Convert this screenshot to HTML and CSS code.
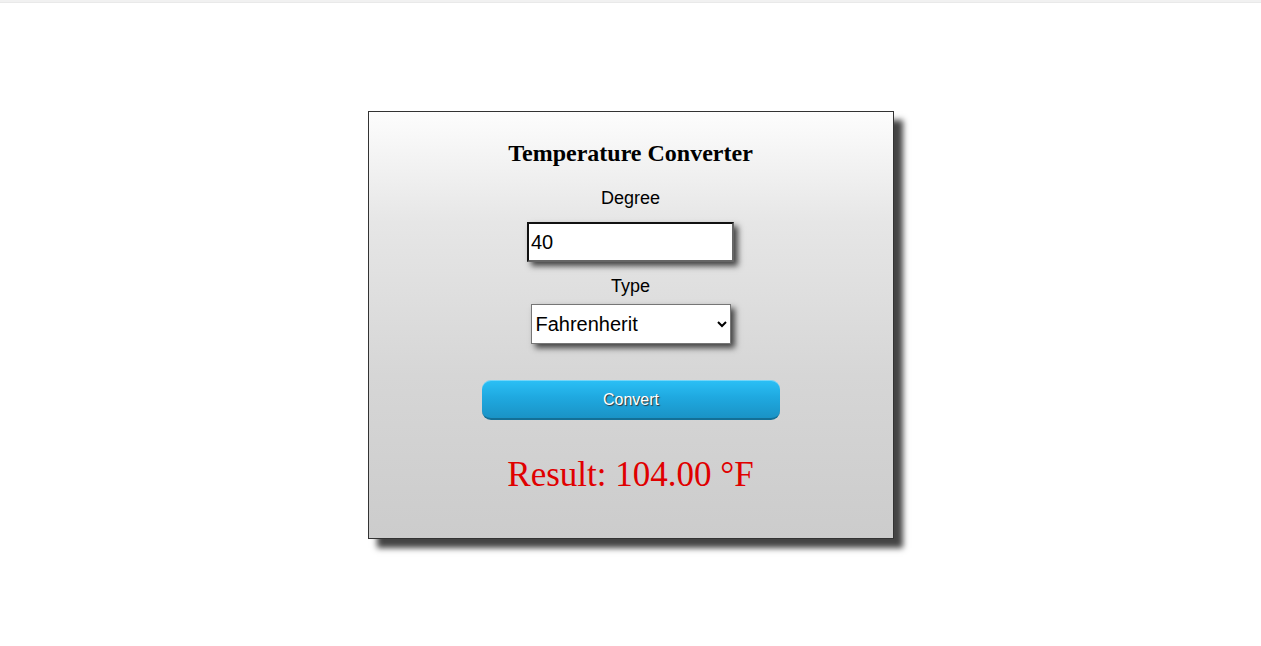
FILE: index.html
```html
<!DOCTYPE html>
<html lang="en">
<head>
<meta charset="utf-8">
<title>Temperature Converter</title>
<link rel="stylesheet" href="styles.css">
</head>
<body>
<div class="topbar"></div>
<div class="card">
  <h2 class="title">Temperature Converter</h2>
  <label class="label label-degree" for="degree">Degree</label>
  <input class="degree" id="degree" type="text" value="40">
  <label class="label label-type" for="type">Type</label>
  <select class="type" id="type">
    <option>Fahrenherit</option>
    <option>Celsius</option>
  </select>
  <button class="convert" type="button">Convert</button>
  <div class="result">Result: 104.00 °F</div>
</div>
</body>
</html>
```
FILE: styles.css
```css
html, body {
  margin: 0;
  padding: 0;
  background: #ffffff;
}

body {
  font-family: "Liberation Sans", Arial, sans-serif;
  min-height: 646px;
}

.topbar {
  height: 2px;
  background: #f1f1f1;
  border-bottom: 1px solid #e9e9e9;
}

.card {
  box-sizing: border-box;
  width: 526px;
  margin: 108px auto 40px;
  border: 1px solid #333333;
  background: linear-gradient(to bottom, #fdfdfd 0%, #e6e6e6 26%, #d6d6d6 62%, #cccccc 100%);
  box-shadow: 9px 9px 6px #444444;
  display: flex;
  flex-direction: column;
  align-items: center;
  padding: 28px 0 43px;
}

.title {
  margin: 0;
  font-family: "Liberation Serif", "Times New Roman", serif;
  font-size: 24px;
  font-weight: bold;
  line-height: 27px;
  color: #000;
}

.label {
  font-size: 18px;
  line-height: 21px;
  color: #000;
}

.label-degree {
  margin-top: 21px;
}

.degree {
  box-sizing: border-box;
  margin-top: 13px;
  width: 207px;
  height: 40px;
  padding: 0 2px;
  font-family: "Liberation Sans", Arial, sans-serif;
  font-size: 20px;
  color: #000;
  background: #fff;
  border-style: solid;
  border-width: 2px;
  border-color: #111111 #666666 #666666 #111111;
  box-shadow: 4px 4px 6px #444444;
  outline: none;
}

.label-type {
  margin-top: 14px;
}

.type {
  box-sizing: border-box;
  margin-top: 7px;
  width: 200px;
  height: 40px;
  font-family: "Liberation Sans", Arial, sans-serif;
  font-size: 20px;
  color: #000;
  background: #fff;
  border: 1px solid #767676;
  border-radius: 0;
  box-shadow: 4px 4px 6px #444444;
}

.convert {
  box-sizing: border-box;
  margin-top: 36px;
  margin-left: 1px;
  width: 298px;
  height: 40px;
  padding-top: 2px;
  border: none;
  border-bottom: 2px solid #136f96;
  border-radius: 9px;
  background: linear-gradient(to bottom, #2bc0f6 0%, #1fa9e0 45%, #1a93c6 100%);
  box-shadow: inset 0 1px 0 rgba(255, 255, 255, 0.35);
  color: #ffffff;
  font-family: "Liberation Sans", Arial, sans-serif;
  font-size: 16px;
  text-shadow: 1px 1px 1px #333333;
  cursor: pointer;
}

.result {
  margin-top: 35px;
  font-family: "Liberation Serif", "Times New Roman", serif;
  font-size: 35px;
  line-height: 40px;
  color: #e00000;
}
```
